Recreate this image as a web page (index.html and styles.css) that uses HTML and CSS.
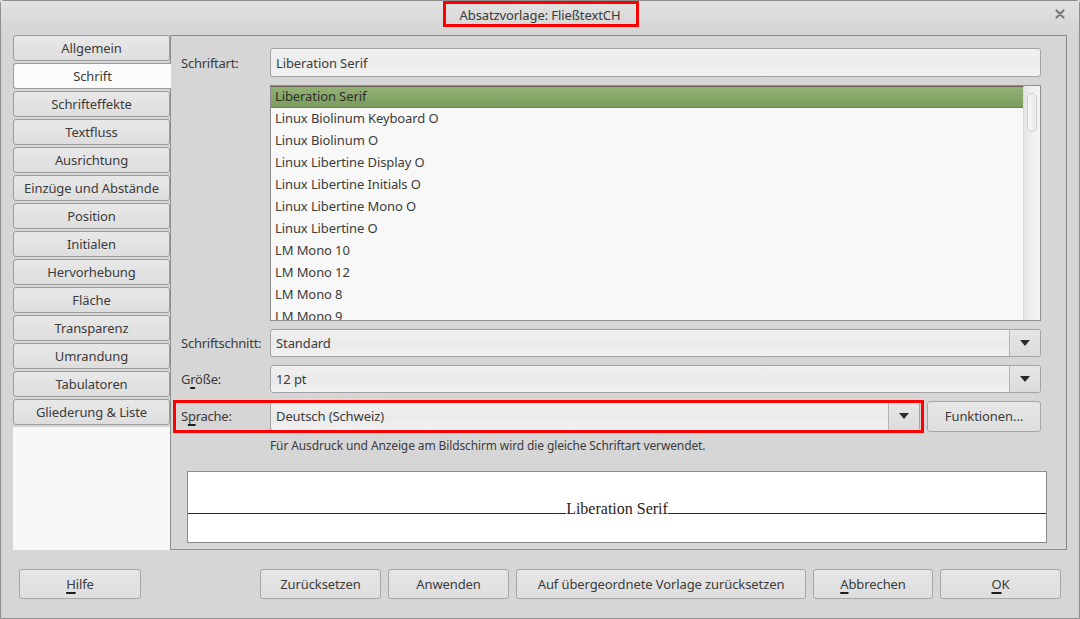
FILE: index.html
```html
<!DOCTYPE html>
<html lang="de">
<head>
<meta charset="utf-8">
<title>Absatzvorlage: FließtextCH</title>
<link rel="stylesheet" href="styles.css">
</head>
<body>
<div class="window">
  <header class="titlebar">
    <span class="title">Absatzvorlage: FließtextCH</span>
    <span class="title-mark"></span>
    <svg class="close" width="10" height="10" viewBox="0 0 10 10" aria-label="Schließen">
      <path d="M1.5 1.5 L8.5 8.5 M8.5 1.5 L1.5 8.5" stroke="#7a7a7a" stroke-width="2.2" stroke-linecap="round"/>
    </svg>
  </header>

  <div class="main">
    <nav class="tabs">
      <div class="tab">Allgemein</div>
      <div class="tab active">Schrift</div>
      <div class="tab">Schrifteffekte</div>
      <div class="tab">Textfluss</div>
      <div class="tab">Ausrichtung</div>
      <div class="tab">Einzüge und Abstände</div>
      <div class="tab">Position</div>
      <div class="tab">Initialen</div>
      <div class="tab">Hervorhebung</div>
      <div class="tab">Fläche</div>
      <div class="tab">Transparenz</div>
      <div class="tab">Umrandung</div>
      <div class="tab">Tabulatoren</div>
      <div class="tab">Gliederung &amp; Liste</div>
      <div class="tabs-fill"></div>
    </nav>

    <section class="panel">
      <div class="row row-name">
        <span class="lbl">Schriftart:</span>
        <div class="entry">Liberation Serif</div>
      </div>

      <div class="row row-list">
        <span class="lbl"></span>
        <div class="listbox">
          <ul class="items">
            <li class="item selected">Liberation Serif</li>
            <li class="item">Linux Biolinum Keyboard O</li>
            <li class="item">Linux Biolinum O</li>
            <li class="item">Linux Libertine Display O</li>
            <li class="item">Linux Libertine Initials O</li>
            <li class="item">Linux Libertine Mono O</li>
            <li class="item">Linux Libertine O</li>
            <li class="item">LM Mono 10</li>
            <li class="item">LM Mono 12</li>
            <li class="item">LM Mono 8</li>
            <li class="item">LM Mono 9</li>
          </ul>
          <div class="vscroll"><div class="thumb"></div></div>
        </div>
      </div>

      <div class="row row-combo">
        <span class="lbl">Schriftschnitt:</span>
        <div class="combo">
          <span class="combo-text">Standard</span>
          <span class="combo-btn"></span>
        </div>
      </div>

      <div class="row row-combo">
        <span class="lbl">G<span class="mn">r</span>öße:</span>
        <div class="combo">
          <span class="combo-text">12 pt</span>
          <span class="combo-btn"></span>
        </div>
      </div>

      <div class="row row-lang">
        <span class="lbl">S<span class="mn">p</span>rache:</span>
        <div class="combo combo-lang">
          <span class="combo-text">Deutsch (Schweiz)</span>
          <span class="combo-btn"></span>
        </div>
        <button class="btn btn-func">Funktionen…</button>
        <span class="lang-mark"></span>
      </div>

      <p class="hint">Für Ausdruck und Anzeige am Bildschirm wird die gleiche Schriftart verwendet.</p>

      <div class="preview">
        <span class="rule"></span>
        <span class="sample">Liberation Serif</span>
        <span class="rule"></span>
      </div>
    </section>
  </div>

  <footer class="footer">
    <button class="btn w-help"><span class="mn">H</span>ilfe</button>
    <div class="actions">
      <button class="btn w-reset">Zurücksetzen</button>
      <button class="btn w-apply">Anwenden</button>
      <button class="btn w-parent">Auf übergeordnete Vorlage zurücksetzen</button>
      <button class="btn w-cancel"><span class="mn">A</span>bbrechen</button>
      <button class="btn w-ok"><span class="mn">O</span>K</button>
    </div>
  </footer>
</div>
</body>
</html>
```

FILE: styles.css
```css
* { box-sizing: border-box; }

html, body {
  margin: 0;
  padding: 0;
  background: #d6d6d6;
}

body {
  font-family: "Noto Sans", "DejaVu Sans", sans-serif;
  font-size: 13px;
  letter-spacing: -0.1px;
  color: #3c3c3c;
}

.window {
  width: 1080px;
  height: 619px;
  border: 1px solid #8e8e8e;
  border-radius: 4px 4px 0 0;
  background: #d6d6d6;
  display: flex;
  flex-direction: column;
}

/* ---------- title bar ---------- */
.titlebar {
  position: relative;
  height: 27px;
  flex: none;
  display: flex;
  align-items: center;
  justify-content: center;
  background: linear-gradient(#e2e2e2, #dadada 70%, #d6d6d6);
}

.title {
  color: #3a3a3a;
  line-height: 18px;
}

.title-mark {
  position: absolute;
  left: 442px;
  top: 0;
  width: 196px;
  height: 26px;
  border: 3px solid #ff0000;
}

.close {
  position: absolute;
  right: 14px;
  top: 8px;
}

/* ---------- main area ---------- */
.main {
  flex: none;
  height: 522px;
  display: flex;
  padding: 7px 12px 0 12px;
}

.tabs {
  width: 157px;
  flex: none;
  display: flex;
  flex-direction: column;
  gap: 2px;
}

.tab {
  height: 26px;
  flex: none;
  display: flex;
  align-items: center;
  justify-content: center;
  border: 1px solid #9c9c9c;
  border-radius: 3px;
  background: linear-gradient(#e8e8e8, #dedede);
  color: #3c3c3c;
  white-space: nowrap;
}

.tab.active {
  position: relative;
  z-index: 1;
  margin-right: -1px;
  border-right: none;
  border-radius: 3px 0 0 3px;
  background: #fbfbfb;
}

.tabs-fill {
  flex: 1;
  background: #f7f7f7;
}

.panel {
  flex: 1;
  border: 1px solid #8c8c8c;
  background: #d6d6d6;
  padding: 12px 25px 0 10px;
  display: flex;
  flex-direction: column;
}

.row {
  display: flex;
  align-items: center;
  flex: none;
}

.lbl {
  width: 89px;
  flex: none;
  white-space: nowrap;
  letter-spacing: -0.25px;
}

.mn {
  text-decoration: underline;
  text-decoration-thickness: 2px;
  text-underline-offset: 3px;
  text-decoration-color: #1e1e1e;
}

/* text entry */
.row-name { height: 29px; }

.entry {
  flex: 1;
  height: 29px;
  display: flex;
  align-items: center;
  padding-left: 5px;
  border: 1px solid #a3a3a3;
  border-radius: 3px;
  background: linear-gradient(#f1f1f1, #ececec 55%, #f3f3f3);
}

/* font list */
.row-list {
  margin-top: 8px;
  height: 236px;
  align-items: stretch;
}

.listbox {
  flex: 1;
  display: flex;
  border: 1px solid #8f8f8f;
  background: #f8f8f8;
  overflow: hidden;
}

.items {
  flex: 1;
  list-style: none;
  margin: 0;
  padding: 0;
}

.item {
  height: 22px;
  line-height: 20px;
  padding-left: 4px;
  white-space: nowrap;
}

.item.selected {
  background: linear-gradient(#94b176, #86a668 55%, #7c9c5d);
  border-top: 1px solid #6d625a;
  border-bottom: 1px solid #6f7a5e;
  line-height: 19px;
  color: #2f2f2f;
}

.vscroll {
  width: 17px;
  flex: none;
  position: relative;
  border-left: 1px dotted #c4c2b0;
  background: linear-gradient(90deg, #e4e4e4, #efefef 50%, #f4f4f4);
}

.thumb {
  position: absolute;
  left: 3px;
  top: 7px;
  width: 10px;
  height: 39px;
  border: 1px solid #d0d0d0;
  border-radius: 5px;
  background: linear-gradient(90deg, #f6f6f6, #e9e9e9);
}

/* combo boxes */
.row-combo {
  margin-top: 8px;
  height: 28px;
}

.combo {
  flex: 1;
  height: 100%;
  display: flex;
  border: 1px solid #a3a3a3;
  border-radius: 3px;
  background: linear-gradient(#f0f0f0, #eaeaea 55%, #f2f2f2);
  overflow: hidden;
}

.combo-text {
  flex: 1;
  display: flex;
  align-items: center;
  padding-left: 5px;
}

.combo-btn {
  width: 31px;
  flex: none;
  position: relative;
  border-left: 1px solid #b4b4b4;
  background: linear-gradient(#e6e6e6, #dcdcdc);
}

.combo-btn::after {
  content: "";
  position: absolute;
  left: 10px;
  top: 50%;
  margin-top: -3px;
  border-left: 5px solid transparent;
  border-right: 5px solid transparent;
  border-top: 6px solid #2c2c2c;
}

/* language row with its highlight frame */
.row-lang {
  position: relative;
  margin-top: 8px;
  height: 30px;
  gap: 7px;
}

.combo-lang {
  flex: 1;
  height: 30px;
}

.combo-lang .combo-text { padding-bottom: 1px; }

.row-lang .lbl { margin-right: -7px; }

.lang-mark {
  position: absolute;
  left: -8px;
  top: -1px;
  width: 751px;
  height: 33px;
  border: 3px solid #ff0000;
  pointer-events: none;
}

.btn {
  font: inherit;
  letter-spacing: inherit;
  color: #3c3c3c;
  height: 30px;
  border: 1px solid #a6a6a6;
  border-radius: 3px;
  background: linear-gradient(#e6e6e6, #dedede);
  padding: 0;
  white-space: nowrap;
}

.btn-func {
  width: 114px;
  flex: none;
  height: 31px;
}

.hint {
  margin: 7px 0 0 89px;
  font-size: 12px;
  letter-spacing: -0.12px;
  line-height: 16px;
  color: #3c3c3c;
}

/* preview */
.preview {
  margin: 17px -6px 0 6px;
  height: 72px;
  border: 1px solid #8c8c8c;
  background: #ffffff;
  display: flex;
  align-items: flex-end;
  padding-bottom: 28px;
}

.rule {
  flex: 1;
  height: 1px;
  background: #2a2a2a;
}

.sample {
  font-family: "Liberation Serif", "Times New Roman", serif;
  font-size: 16px;
  letter-spacing: 0;
  line-height: 11px;
  color: #2b2222;
}

/* ---------- footer ---------- */
.footer {
  flex: 1;
  display: flex;
  align-items: flex-start;
  padding: 19px 18px 0 18px;
}

.actions {
  margin-left: auto;
  display: flex;
  gap: 7px;
}

.w-help { width: 122px; }
.w-reset { width: 121px; }
.w-apply { width: 121px; }
.w-parent { width: 290px; }
.w-cancel { width: 120px; }
.w-ok { width: 121px; }
```
